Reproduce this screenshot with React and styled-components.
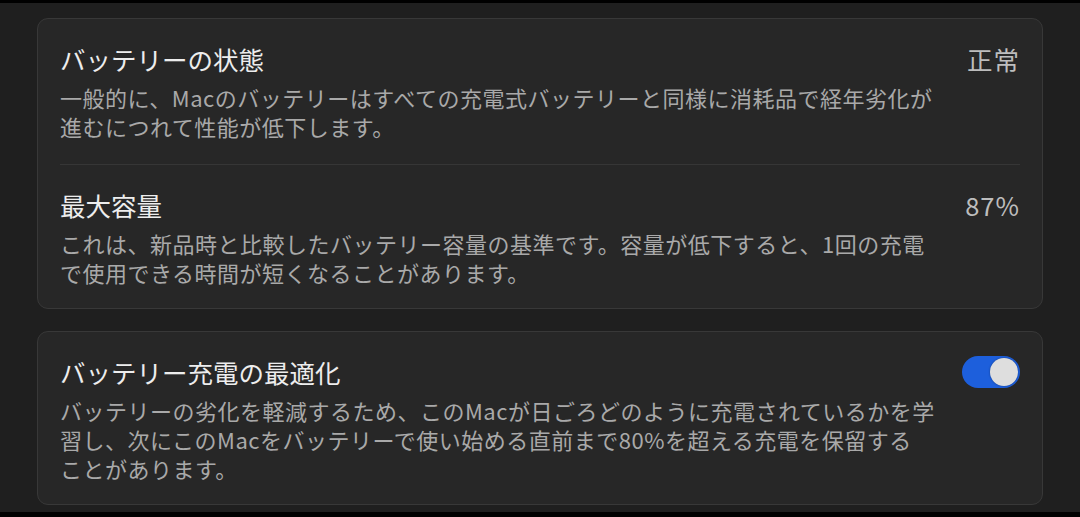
import React from "react";
import styled, { createGlobalStyle } from "styled-components";

const GlobalStyle = createGlobalStyle`
    html, body {
        margin: 0;
        padding: 0;
        background: #000;
    }
    body {
        font-family: "Noto Sans CJK JP", "Noto Sans", sans-serif;
        -webkit-font-smoothing: antialiased;
    }
`

const Screen = styled.div`
    margin-top: 3px;
    height: 509px;
    background-color: #1f1f1f;
    padding: 15px 37px 0 37px;
    box-sizing: border-box;
    display: flex;
    flex-direction: column;
    gap: 22px;
`

const Card = styled.section`
    background-color: #272727;
    border: 1px solid #383838;
    border-radius: 11px;
    padding: 0 22px 0 22px;
    display: flex;
    flex-direction: column;
`

const Row = styled.div`
    display: flex;
    flex-direction: row;
    justify-content: space-between;
    align-items: flex-start;
    padding: 24px 0 ${props => props.$bottom || 22}px 0;
    border-top: ${props => props.$divided ? "1px solid #363636" : "none"};
`

const TextBlock = styled.div`
    display: flex;
    flex-direction: column;
    gap: 8px;
`

const Title = styled.h2`
    margin: 0;
    font-size: 25.5px;
    line-height: 32px;
    font-weight: 400;
    color: #ededed;
    white-space: nowrap;
`

const Description = styled.p`
    margin: 0;
    font-size: 22px;
    line-height: 29px;
    letter-spacing: 0.5px;
    font-weight: 400;
    color: #a9a9a9;
    white-space: nowrap;
`

const Value = styled.span`
    font-size: 25.5px;
    line-height: 32px;
    letter-spacing: 1px;
    color: #bdbdbd;
    white-space: nowrap;
`

const Toggle = styled.div`
    width: 58px;
    height: 32px;
    border-radius: 16px;
    background-color: ${props => props.$on ? "#1d5fdc" : "#444"};
    display: flex;
    align-items: center;
    justify-content: ${props => props.$on ? "flex-end" : "flex-start"};
    padding: 0 2px;
    box-sizing: border-box;
    flex-shrink: 0;
`

const Knob = styled.span`
    width: 28px;
    height: 28px;
    border-radius: 50%;
    background-color: #dedede;
    box-shadow: 0 0 2px rgba(0, 0, 0, 0.4);
`

const sections = [
    {
        title: "バッテリーの状態",
        value: "正常",
        lines: [
            "一般的に、Macのバッテリーはすべての充電式バッテリーと同様に消耗品で経年劣化が",
            "進むにつれて性能が低下します。"
        ]
    },
    {
        title: "最大容量",
        value: "87%",
        lines: [
            "これは、新品時と比較したバッテリー容量の基準です。容量が低下すると、1回の充電",
            "で使用できる時間が短くなることがあります。"
        ]
    }
]

const Lines = ({ lines }) => (
    <Description>
        {lines.map((line, i) => (
            <React.Fragment key={i}>
                {line}
                {i < lines.length - 1 ? <br /> : null}
            </React.Fragment>
        ))}
    </Description>
)

export default function App() {
    return (
        <>
            <GlobalStyle />
            <Screen>
                <Card>
                    {sections.map((s, i) => (
                        <Row key={i} $divided={i > 0} $bottom={i === 0 ? 23 : 21}>
                            <TextBlock>
                                <Title>{s.title}</Title>
                                <Lines lines={s.lines} />
                            </TextBlock>
                            <Value>{s.value}</Value>
                        </Row>
                    ))}
                </Card>
                <Card>
                    <Row $bottom={21}>
                        <TextBlock>
                            <Title>バッテリー充電の最適化</Title>
                            <Lines lines={[
                                "バッテリーの劣化を軽減するため、このMacが日ごろどのように充電されているかを学",
                                "習し、次にこのMacをバッテリーで使い始める直前まで80%を超える充電を保留する",
                                "ことがあります。"
                            ]} />
                        </TextBlock>
                        <Toggle $on>
                            <Knob />
                        </Toggle>
                    </Row>
                </Card>
            </Screen>
        </>
    )
}
